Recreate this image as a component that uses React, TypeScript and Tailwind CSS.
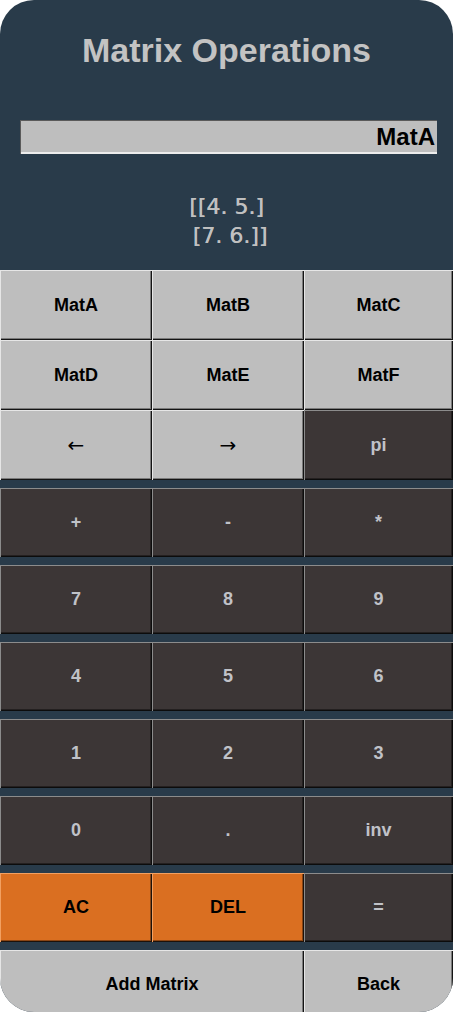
import React from "react";

type Tone = "light" | "dark" | "orange";

const TONES: Record<Tone, string> = {
  light:
    "bg-[#bebebe] text-black shadow-[inset_1px_1px_0_#e6e6e6,inset_-1px_-1px_0_#141414,inset_-2px_-2px_0_#7a7a7a]",
  dark:
    "bg-[#3c3636] text-[#c0c2c8] shadow-[inset_1px_1px_0_#8c8c8c,inset_-1px_-1px_0_#0c0c0c,inset_-2px_-2px_0_#242020]",
  orange:
    "bg-[#da6f21] text-black shadow-[inset_1px_1px_0_#f2a061,inset_-1px_-1px_0_#1e120a,inset_-2px_-2px_0_#8a4514]",
};

function Key({
  label,
  tone,
  className = "",
}: {
  label: string;
  tone: Tone;
  className?: string;
}) {
  return (
    <button
      className={`flex items-center justify-center text-[18px] font-bold ${TONES[tone]} ${className}`}
    >
      {label}
    </button>
  );
}

// rows below the matrix selector, each separated by a strip of background
const ROWS: { label: string; tone: Tone }[][] = [
  [
    { label: "+", tone: "dark" },
    { label: "-", tone: "dark" },
    { label: "*", tone: "dark" },
  ],
  [
    { label: "7", tone: "dark" },
    { label: "8", tone: "dark" },
    { label: "9", tone: "dark" },
  ],
  [
    { label: "4", tone: "dark" },
    { label: "5", tone: "dark" },
    { label: "6", tone: "dark" },
  ],
  [
    { label: "1", tone: "dark" },
    { label: "2", tone: "dark" },
    { label: "3", tone: "dark" },
  ],
  [
    { label: "0", tone: "dark" },
    { label: ".", tone: "dark" },
    { label: "inv", tone: "dark" },
  ],
  [
    { label: "AC", tone: "orange" },
    { label: "DEL", tone: "orange" },
    { label: "=", tone: "dark" },
  ],
];

const MATS = ["MatA", "MatB", "MatC", "MatD", "MatE", "MatF"];

export default function App() {
  return (
    <div className="min-h-screen bg-white">
      <div className="flex h-[1012px] w-[453px] flex-col overflow-hidden rounded-[34px] bg-[#293b4a] font-['Liberation_Sans',Arial,sans-serif]">
        <div className="flex h-[270px] shrink-0 flex-col items-center">
          <h1 className="mt-[30px] text-[34px] font-bold leading-[40px] text-[#c3c3c3]">
            Matrix Operations
          </h1>
          <div className="mt-[50px] ml-[20px] flex h-[34px] w-[417px] items-center justify-end self-start bg-[#bebebe] pr-[2px] text-[24px] font-bold text-black shadow-[inset_1px_1px_0_#5a5a5a,inset_0_-2px_0_#ececec]">
            MatA
          </div>
          <div className="mt-[38px] whitespace-pre text-center font-['DejaVu_Sans',sans-serif] text-[22px] leading-[29px] text-[#c0c0c0] [text-shadow:0.4px_0_0_#c0c0c0]">
            {"[[4. 5.]\n [7. 6.]]"}
          </div>
        </div>

        <div className="grid shrink-0 grid-cols-[152px_152px_1fr] grid-rows-[70px_70px_70px]">
          {MATS.map((m) => (
            <Key key={m} label={m} tone="light" />
          ))}
          <Key
            label="←"
            tone="light"
            className="font-['DejaVu_Sans',sans-serif] !text-[20px] !font-normal"
          />
          <Key
            label="→"
            tone="light"
            className="font-['DejaVu_Sans',sans-serif] !text-[20px] !font-normal"
          />
          <Key label="pi" tone="dark" />
        </div>

        <div className="mt-2 flex shrink-0 flex-col gap-2">
          {ROWS.map((row, i) => (
            <div key={i} className="grid h-[69px] grid-cols-[152px_152px_1fr]">
              {row.map((k) => (
                <Key key={k.label} label={k.label} tone={k.tone} />
              ))}
            </div>
          ))}
          <div className="grid h-[69px] grid-cols-[152px_152px_1fr]">
            <Key label="Add Matrix" tone="light" className="col-span-2" />
            <Key label="Back" tone="light" />
          </div>
        </div>
      </div>
    </div>
  );
}
